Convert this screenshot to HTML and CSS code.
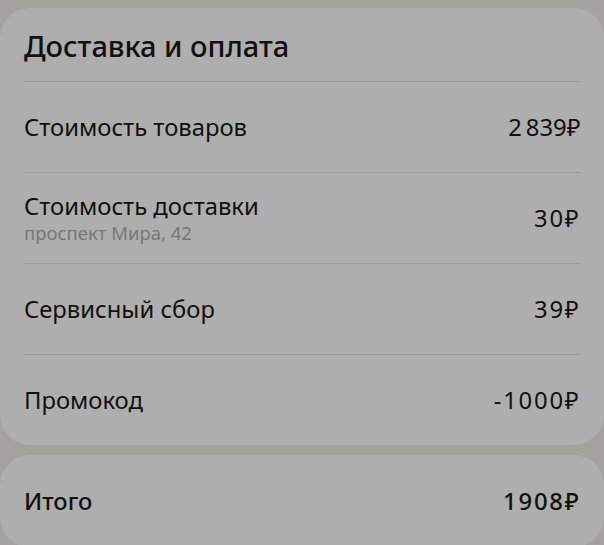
FILE: index.html
```html
<!DOCTYPE html>
<html lang="ru">
<head>
<meta charset="utf-8">
<title>Доставка и оплата</title>
<link rel="stylesheet" href="styles.css">
</head>
<body>
<main class="sheet">
  <section class="card summary">
    <h2 class="summary-title">Доставка и оплата</h2>
    <div class="row">
      <div class="row-label">Стоимость товаров</div>
      <div class="row-value">2&#8239;839₽</div>
    </div>
    <div class="row">
      <div class="row-label">
        <div>Стоимость доставки</div>
        <div class="row-hint">проспект Мира, 42</div>
      </div>
      <div class="row-value">30₽</div>
    </div>
    <div class="row">
      <div class="row-label">Сервисный сбор</div>
      <div class="row-value">39₽</div>
    </div>
    <div class="row">
      <div class="row-label">Промокод</div>
      <div class="row-value">-1000₽</div>
    </div>
  </section>
  <section class="card total">
    <div class="row row-total">
      <div class="row-label">Итого</div>
      <div class="row-value">1908₽</div>
    </div>
  </section>
</main>
</body>
</html>
```
FILE: styles.css
```css
html, body {
  margin: 0;
  padding: 0;
}

body {
  background: #a4a29f;
  font-family: "Noto Sans", "DejaVu Sans", sans-serif;
  color: #111;
  overflow: hidden;
}

.sheet {
  display: flex;
  flex-direction: column;
  gap: 10px;
  padding-top: 8px;
}

.card {
  background: #aeaeae;
  border-radius: 30px;
  padding: 0 24px;
}

.summary-title {
  margin: 0;
  height: 74px;
  box-sizing: border-box;
  padding-top: 22px;
  font-size: 29px;
  font-weight: 500;
  line-height: 32px;
  border-bottom: 1px solid #9b9b9b;
}

.row {
  display: flex;
  align-items: center;
  justify-content: space-between;
  box-sizing: border-box;
  height: 91px;
  border-bottom: 1px solid #9b9b9b;
  font-size: 23.8px;
  line-height: 28px;
}

.summary .row:last-child {
  border-bottom: none;
  height: 90px;
}

.row-value {
  letter-spacing: 1.8px;
  margin-right: -0.5px;
}

.row-hint {
  margin-top: 1px;
  font-size: 18.5px;
  line-height: 24px;
  color: #777;
}

.row-total {
  border-bottom: none;
  height: 92px;
  font-weight: 500;
}
```
